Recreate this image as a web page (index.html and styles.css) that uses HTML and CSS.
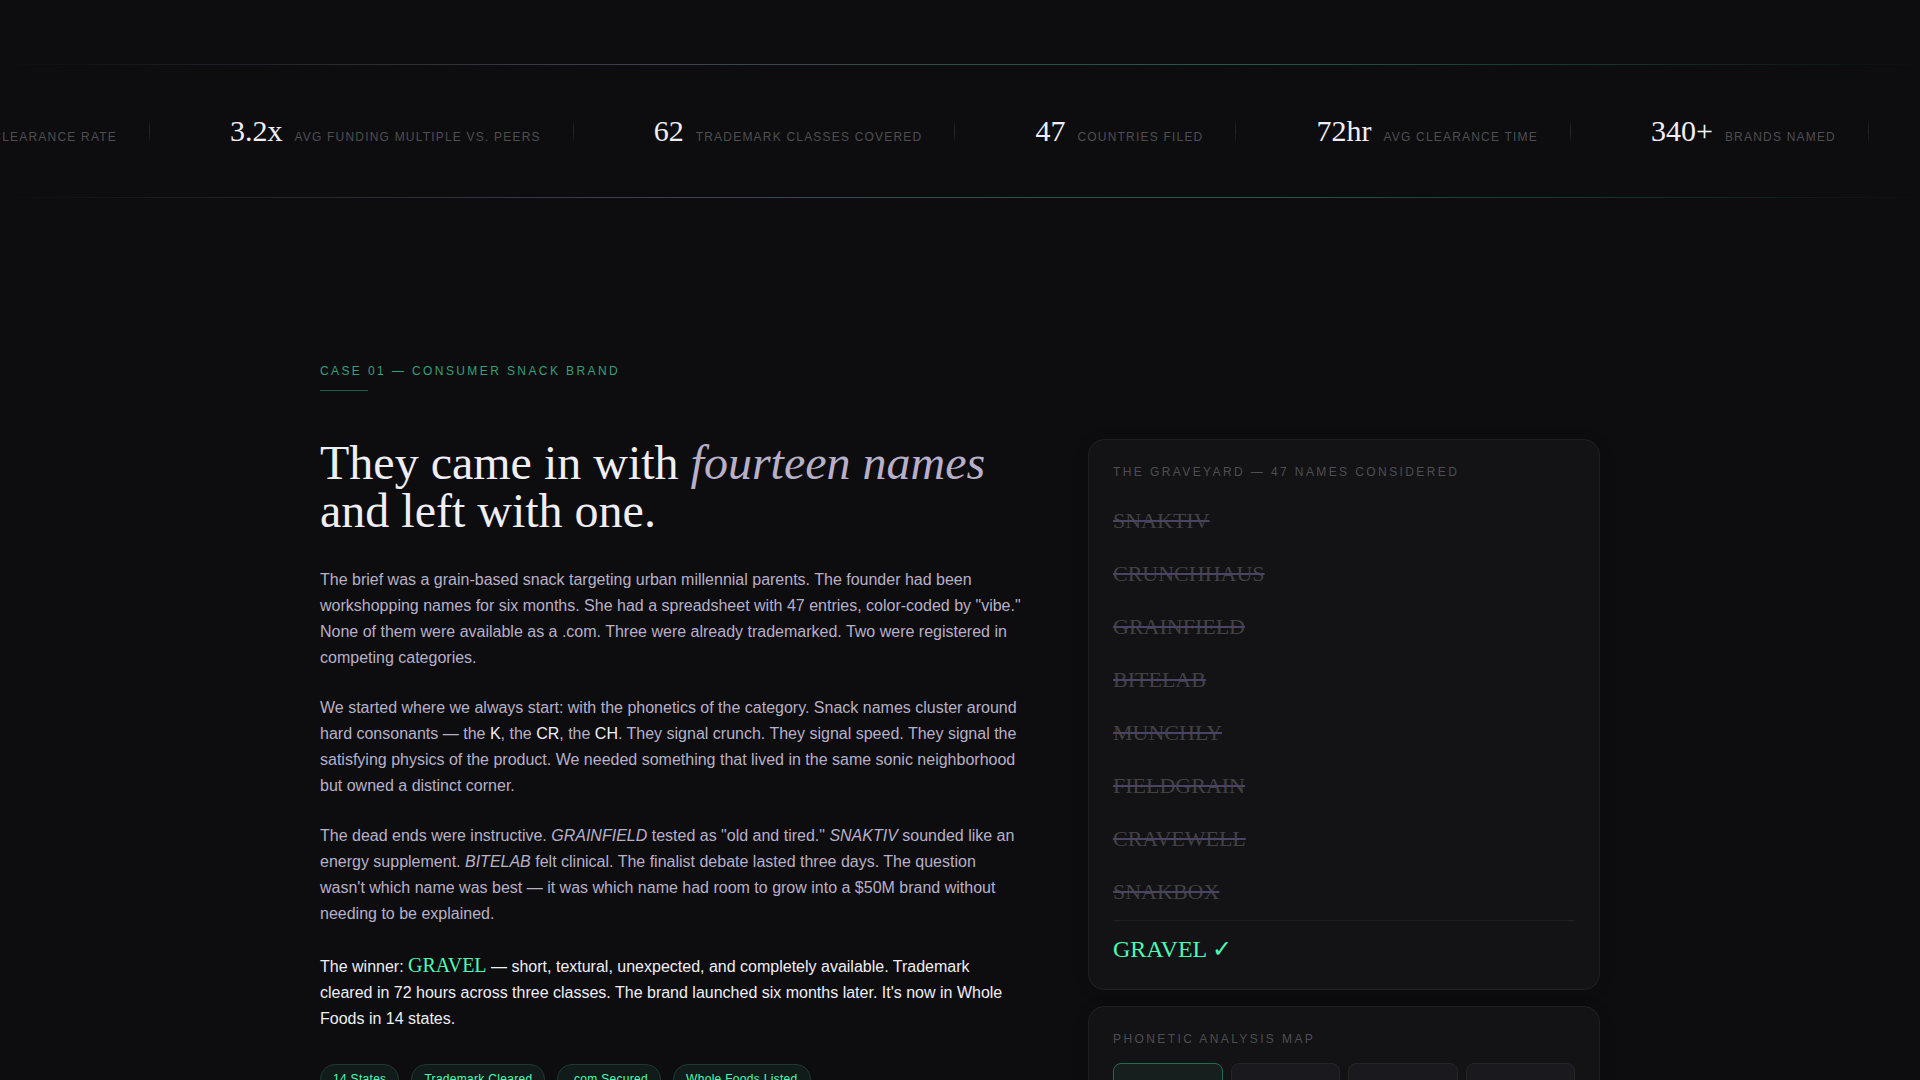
FILE: index.html
```html
<!DOCTYPE html>
<html lang="en">
<head>
<meta charset="utf-8">
<meta name="viewport" content="width=device-width, initial-scale=1">
<title>Case 01 — Consumer Snack Brand</title>
<link rel="stylesheet" href="styles.css">
</head>
<body>
<section class="ticker" aria-label="Key figures">
  <ul class="ticker-track">
    <li class="stat"><span class="stat-label">Clearance rate</span></li>
    <li class="stat"><span class="stat-value">3.2x</span><span class="stat-label">Avg funding multiple vs. peers</span></li>
    <li class="stat"><span class="stat-value">62</span><span class="stat-label">Trademark classes covered</span></li>
    <li class="stat"><span class="stat-value">47</span><span class="stat-label">Countries filed</span></li>
    <li class="stat"><span class="stat-value">72hr</span><span class="stat-label">Avg clearance time</span></li>
    <li class="stat"><span class="stat-value">340+</span><span class="stat-label">Brands named</span></li>
  </ul>
</section>

<main class="case">
  <p class="eyebrow">Case 01 — Consumer snack brand</p>
  <div class="case-grid">
    <article class="story">
      <h2>They came in with <em>fourteen names</em> and left with one.</h2>
      <p>The brief was a grain-based snack targeting urban millennial parents. The founder had been workshopping names for six months. She had a spreadsheet with 47 entries, color-coded by "vibe." None of them were available as a .com. Three were already trademarked. Two were registered in competing categories.</p>
      <p>We started where we always start: with the phonetics of the category. Snack names cluster around hard consonants — the <strong>K</strong>, the <strong>CR</strong>, the <strong>CH</strong>. They signal crunch. They signal speed. They signal the satisfying physics of the product. We needed something that lived in the same sonic neighborhood but owned a distinct corner.</p>
      <p>The dead ends were instructive. <em>GRAINFIELD</em> tested as "old and tired." <em>SNAKTIV</em> sounded like an energy supplement. <em>BITELAB</em> felt clinical. The finalist debate lasted three days. The question wasn't which name was best — it was which name had room to grow into a $50M brand without needing to be explained.</p>
      <p class="winner">The winner: <span class="winner-name">GRAVEL</span> — short, textural, unexpected, and completely available. Trademark cleared in 72 hours across three classes. The brand launched six months later. It's now in Whole Foods in 14 states.</p>
      <ul class="chips">
        <li>14 States</li>
        <li>Trademark Cleared</li>
        <li>.com Secured</li>
        <li>Whole Foods Listed</li>
      </ul>
    </article>

    <aside class="panels">
      <section class="panel">
        <h3>The graveyard — 47 names considered</h3>
        <ul class="graveyard">
          <li><s>SNAKTIV</s></li>
          <li><s>CRUNCHHAUS</s></li>
          <li><s>GRAINFIELD</s></li>
          <li><s>BITELAB</s></li>
          <li><s>MUNCHLY</s></li>
          <li><s>FIELDGRAIN</s></li>
          <li><s>CRAVEWELL</s></li>
          <li><s>SNAKBOX</s></li>
          <li class="survivor">GRAVEL ✓</li>
        </ul>
      </section>
      <section class="panel">
        <h3>Phonetic analysis map</h3>
        <div class="phonemes">
          <div class="phoneme phoneme-active"></div>
          <div class="phoneme"></div>
          <div class="phoneme"></div>
          <div class="phoneme"></div>
        </div>
      </section>
    </aside>
  </div>
</main>
</body>
</html>
```
FILE: styles.css
```css
:root {
  --bg: #0d0d0f;
  --panel: #131315;
  --line: #1f1f22;
  --text: #f0eef5;
  --muted: #b8b0c8;
  --dim: #4e4d52;
  --mint: #4dfab4;
  --serif: "Liberation Serif", "Times New Roman", serif;
  --sans: "Liberation Sans", Arial, sans-serif;
}

* {
  box-sizing: border-box;
}

body {
  margin: 0;
  padding-top: 64px;
  background: var(--bg);
  color: var(--muted);
  font: 16px/26px var(--sans);
  overflow-x: hidden;
}

h2, h3, p, ul {
  margin: 0;
  padding: 0;
  font-weight: 400;
}

ul {
  list-style: none;
}

/* Stats ticker */
.ticker {
  overflow: hidden;
}

.ticker::before,
.ticker::after {
  content: "";
  display: block;
  height: 1px;
  background: linear-gradient(90deg, transparent, #413f4e 33%, #21594a 66%, transparent);
}

.ticker-track {
  display: flex;
  justify-content: flex-end;
  gap: 80px;
  padding: 48px 51px 48px 0;
}

.stat {
  display: flex;
  flex: none;
  align-items: baseline;
  gap: 12px;
  padding-right: 33px;
  background: linear-gradient(180deg, transparent, #27272b, transparent) right center / 1px 24px no-repeat;
}

/* Zero-width strut: keeps every label on the figures' baseline */
.stat::before {
  content: "\200b";
  width: 0;
  margin-right: -12px;
  font: 30px/36px var(--serif);
}

.stat-value {
  color: var(--text);
  font: 30px/36px var(--serif);
}

.stat-label {
  color: var(--dim);
  font-size: 12px;
  line-height: 16px;
  letter-spacing: 0.1em;
  text-transform: uppercase;
}

/* Case study */
.case {
  max-width: 1280px;
  margin: 0 auto;
  padding: 160px 0;
}

.eyebrow {
  color: #35a07a;
  font-size: 12px;
  line-height: 26px;
  letter-spacing: 0.2em;
  text-transform: uppercase;
}

.eyebrow::after {
  content: "";
  display: block;
  width: 48px;
  height: 1px;
  margin-top: 6px;
  background: #245c48;
}

.case-grid {
  display: grid;
  grid-template-columns: 3fr 2fr;
  align-items: start;
  margin-top: 48px;
}

.story {
  padding-right: 64px;
}

.story h2 {
  margin-bottom: 32px;
  color: var(--text);
  font: 48px/48px var(--serif);
}

.story h2 em {
  color: var(--muted);
}

.story p {
  margin-bottom: 24px;
}

.story strong {
  color: var(--text);
  font-weight: 400;
}

.story .winner {
  margin-bottom: 32px;
  color: var(--text);
}

.winner-name {
  color: var(--mint);
  font: 20px/28px var(--serif);
}

.chips {
  display: flex;
  flex-wrap: wrap;
  gap: 12px;
}

.chips li {
  padding: 4px 12px;
  border: 1px solid #1d3a31;
  border-radius: 16px;
  background: #111c1a;
  color: var(--mint);
  font-size: 12px;
  line-height: 20px;
  letter-spacing: 0.025em;
}

/* Side panels */
.panels {
  display: grid;
  gap: 16px;
}

.panel {
  padding: 24px;
  border: 1px solid var(--line);
  border-radius: 16px;
  background: var(--panel);
  box-shadow: 0 2px 16px rgba(0, 0, 0, 0.12);
}

.panel h3 {
  margin-bottom: 16px;
  color: var(--dim);
  font-size: 12px;
  line-height: 16px;
  letter-spacing: 0.2em;
  text-transform: uppercase;
}

.graveyard {
  display: grid;
  gap: 4px;
}

.graveyard li {
  padding: 8px 0;
  color: #424146;
  font: 22px/33px var(--serif);
}

.graveyard s {
  text-decoration: line-through 2px #4b4363;
}

.graveyard .survivor {
  padding: 12px 0 0;
  border-top: 1px solid var(--line);
  color: var(--mint);
  font: 24px/32px var(--serif);
}

.phonemes {
  display: grid;
  grid-template-columns: repeat(4, 1fr);
  gap: 8px;
}

.phoneme {
  height: 72px;
  border: 1px solid #252529;
  border-radius: 8px;
  background: #1a1a1e;
}

.phoneme-active {
  border-color: #246a50;
  background: #15201e;
}
```
